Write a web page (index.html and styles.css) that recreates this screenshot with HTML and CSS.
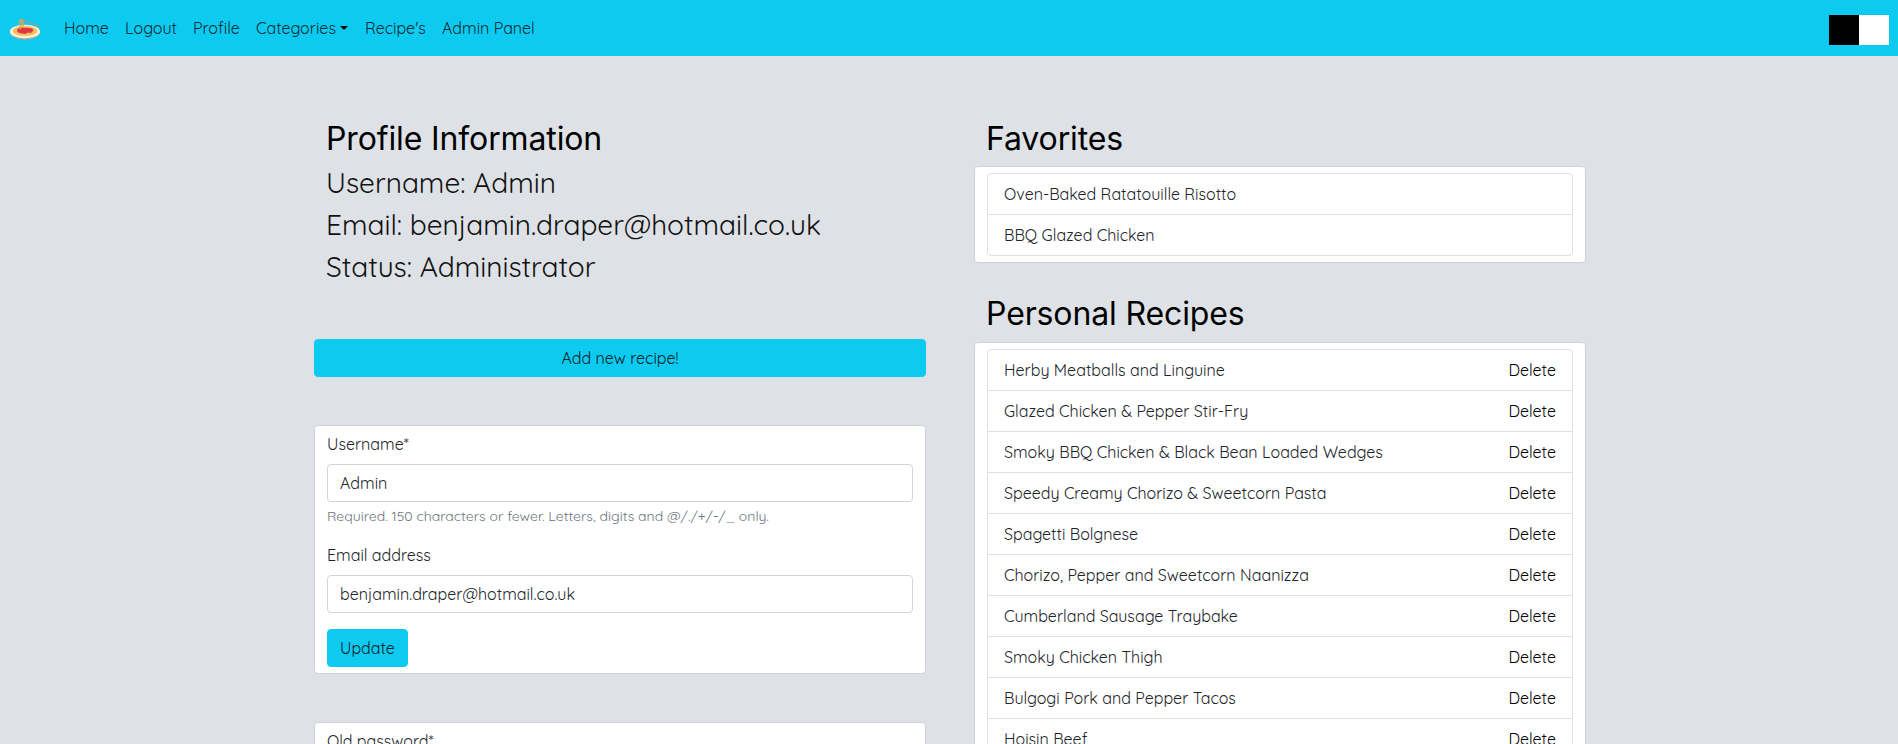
FILE: index.html
```html
<!DOCTYPE html>
<html lang="en">
<head>
<meta charset="utf-8">
<title>Profile</title>
<link rel="stylesheet" href="styles.css">
</head>
<body>
<nav class="navbar">
  <a class="brand" href="#">
    <svg width="32" height="32" viewBox="0 0 32 32">
      <ellipse cx="16" cy="20.300" rx="15" ry="7.300" fill="#c9a58c"/>
      <ellipse cx="16" cy="19.500" rx="15.200" ry="6.800" fill="#fff0d2"/>
      <ellipse cx="16" cy="19" rx="12" ry="5" fill="#f9bd60"/>
      <path d="M8 19q0-3 4-3.500l8 .5q5 0 4 3l-2 2-3-.5-3 1.500-6-1z" fill="#dc3a45"/>
      <path d="M10.700 8.500l.8 9M12.500 8l.5 8M14 8l.5 6" stroke="#e5a83f" stroke-width="1.100" fill="none"/>
      <path d="M11 8.500l19 4.500M13 7.500l17 7" stroke="#a39c91" stroke-width=".8" fill="none"/>
      <path d="M10 9.500q2-2.500 4-1.500" stroke="#e5a83f" stroke-width="1.400" fill="none"/>
    </svg>
  </a>
  <a class="link home" href="#">Home</a>
  <a class="link logout" href="#">Logout</a>
  <a class="link prof" href="#">Profile</a>
  <a class="link cats" href="#">Categories<span class="caret"></span></a>
  <a class="link recipes" href="#">Recipe's</a>
  <a class="link" href="#">Admin Panel</a>
  <div class="themes"><span class="swatch dark"></span><span class="swatch light"></span></div>
</nav>
<main class="page">
  <section class="column">
    <h2 class="title">Profile Information</h2>
    <div class="facts">
      <p class="fact">Username: Admin</p>
      <p class="fact">Email: benjamin.draper@hotmail.co.uk</p>
      <p class="fact">Status: Administrator</p>
    </div>
    <a class="button wide" href="#">Add new recipe!</a>
    <form class="card form">
      <label class="label">Username*</label>
      <div class="input">Admin</div>
      <small class="hint">Required. 150 characters or fewer. Letters, digits and @/./+/-/_ only.</small>
      <label class="label">Email address</label>
      <div class="input">benjamin.draper@hotmail.co.uk</div>
      <a class="button update" href="#">Update</a>
    </form>
    <form class="card form">
      <label class="label">Old password*</label>
      <div class="input"></div>
    </form>
  </section>
  <section class="column">
    <h2 class="title">Favorites</h2>
    <div class="card">
      <ul class="list">
        <li class="item"><span>Oven-Baked Ratatouille Risotto</span></li>
        <li class="item"><span>BBQ Glazed Chicken</span></li>
      </ul>
    </div>
    <h2 class="title second">Personal Recipes</h2>
    <div class="card">
      <ul class="list">
        <li class="item"><span>Herby Meatballs and Linguine</span><a class="delete">Delete</a></li>
        <li class="item"><span>Glazed Chicken &amp; Pepper Stir-Fry</span><a class="delete">Delete</a></li>
        <li class="item"><span>Smoky BBQ Chicken &amp; Black Bean Loaded Wedges</span><a class="delete">Delete</a></li>
        <li class="item"><span>Speedy Creamy Chorizo &amp; Sweetcorn Pasta</span><a class="delete">Delete</a></li>
        <li class="item"><span>Spagetti Bolgnese</span><a class="delete">Delete</a></li>
        <li class="item"><span>Chorizo, Pepper and Sweetcorn Naanizza</span><a class="delete">Delete</a></li>
        <li class="item"><span>Cumberland Sausage Traybake</span><a class="delete">Delete</a></li>
        <li class="item"><span>Smoky Chicken Thigh</span><a class="delete">Delete</a></li>
        <li class="item"><span>Bulgogi Pork and Pepper Tacos</span><a class="delete">Delete</a></li>
        <li class="item"><span>Hoisin Beef</span><a class="delete">Delete</a></li>
      </ul>
    </div>
  </section>
</main>
</body>
</html>
```
FILE: styles.css
```css
* { box-sizing: border-box; }
html { height: 100%; overflow: hidden; }
body {
  margin: 0;
  height: 100%;
  overflow: hidden;
  background: #dee2e6;
  color: #212529;
  font: 400 16px/24px Quicksand, Lato, sans-serif;
}
a { color: inherit; text-decoration: none; }
.navbar {
  display: flex;
  align-items: center;
  height: 56px;
  padding: 0 9px;
  background: #0dcaf0;
  color: #0a2c36;
}
.brand { display: flex; width: 32px; margin-right: 23px; }
.link { white-space: nowrap; }
.home { width: 61px; }
.logout { width: 68px; }
.prof { width: 63px; }
.cats { display: flex; align-items: center; width: 109px; }
.recipes { width: 77px; }
.caret {
  margin: -1px 0 0 4px;
  border-top: 4.800px solid #000;
  border-left: 4.800px solid transparent;
  border-right: 4.800px solid transparent;
}
.themes { display: flex; margin-left: auto; margin-top: 4px; }
.swatch { width: 30px; height: 30px; }
.dark { background: #000; }
.light { background: #fff; }
.page {
  display: grid;
  grid-template-columns: 612px 612px;
  gap: 48px;
  justify-content: center;
  padding: 64px 0 0 2px;
}
.title {
  margin: 0 0 8px;
  padding-left: 12px;
  font: 400 32px/38.4px Inter, sans-serif;
  letter-spacing: -0.13px;
  color: #000;
}
.second { margin-top: 32px; }
.facts { padding: 0 12px; margin: -4px 0 51px; }
.fact {
  margin: 0;
  font-size: 28px;
  line-height: 42px;
  white-space: nowrap;
  color: #111;
}
.button {
  display: inline-block;
  height: 38px;
  padding: 6px 12px;
  border: 1px solid #0dcaf0;
  border-radius: 4px;
  background: #0dcaf0;
  color: #0a2229;
}
.wide { display: block; text-align: center; }
.card {
  padding: 6px 12px;
  border: 1px solid #ced2d6;
  border-radius: 4px;
  background: #fff;
}
.form { margin-top: 48px; }
.label { display: block; margin-bottom: 8px; }
.input {
  height: 38px;
  padding: 6px 12px;
  border: 1px solid #ced4da;
  border-radius: 4px;
  color: #212529;
}
.hint {
  display: block;
  margin: 4px 0 16px;
  font-size: 14px;
  line-height: 21px;
  color: #6c757d;
}
.update { margin-top: 16px; vertical-align: top; }
.list {
  margin: 0;
  padding: 0;
  list-style: none;
  border: 1px solid #dfdfdf;
  border-radius: 4px;
}
.item {
  display: flex;
  justify-content: space-between;
  height: 41px;
  padding: 8px 16px;
}
.item + .item { border-top: 1px solid #dfdfdf; }
.item:first-child { height: 40px; }
.delete { color: #000; }
```
